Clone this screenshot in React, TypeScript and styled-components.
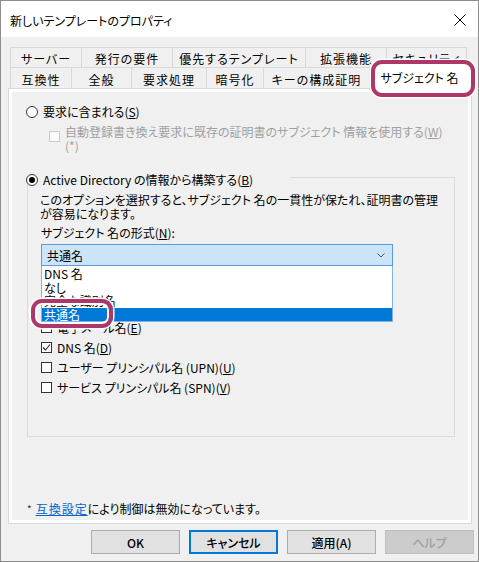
import React from 'react'
import styled, { createGlobalStyle } from 'styled-components'

const GlobalStyle = createGlobalStyle`
  html, body {
    margin: 0;
    padding: 0;
    background: #ffffff;
  }
  body {
    font-family: "Noto Sans CJK JP", "Noto Sans", sans-serif;
    font-size: 12px;
    color: #000;
    font-feature-settings: "palt";
  }
  * { box-sizing: border-box; }
`

const Window = styled.div`
  position: relative;
  width: 479px;
  height: 562px;
  border: 1px solid #8d8d8d;
  background: #f0f0f0;
  display: flex;
  flex-direction: column;
  overflow: hidden;
`

const TitleBar = styled.div`
  height: 36px;
  background: #ffffff;
  display: flex;
  align-items: center;
  justify-content: space-between;
  padding: 2px 12px 0 9px;
`

const Title = styled.span`
  font-size: 12px;
  line-height: 16px;
  padding-top: 2px;
`

const TabStrip = styled.div`
  display: flex;
  flex-direction: column;
  padding: 10px 0 0 9px;
`

const TabRow = styled.div<{ $h: number }>`
  display: flex;
  align-items: flex-start;
  height: ${p => p.$h}px;
`

const Tab = styled.div<{ $w: number }>`
  width: ${p => p.$w}px;
  height: 100%;
  border-top: 1px solid #d9d9d9;
  border-right: 1px solid #d9d9d9;
  display: flex;
  align-items: center;
  justify-content: center;
  padding-top: 2px;
  letter-spacing: 1px;
  white-space: nowrap;
  overflow: hidden;
  &:first-child {
    border-left: 1px solid #d9d9d9;
  }
`

const ActiveTab = styled(Tab)`
  position: relative;
  z-index: 2;
  height: 26px;
  margin: -3px 0 -2px -1px;
  background: #ffffff;
  border-left: 1px solid #d9d9d9;
  letter-spacing: 0;
  padding-top: 0;
`

const Panel = styled.div`
  height: 436px;
  margin: 0 6px 0 7px;
  border: 1px solid #d9d9d9;
  background: #ffffff;
  padding: 3px;
`

const Page = styled.div`
  height: 100%;
  background: #f0f0f0;
  display: flex;
  flex-direction: column;
  padding: 13px 13px 4px 14px;
`

const OptionRow = styled.label`
  display: flex;
  align-items: center;
  gap: 5px;
  height: 14px;
  line-height: 14px;
  white-space: nowrap;
`

const Radio = styled.span<{ $on?: boolean }>`
  width: 12px;
  height: 12px;
  border-radius: 50%;
  border: 1px solid #333333;
  background: #ffffff;
  display: flex;
  align-items: center;
  justify-content: center;
  flex: none;
  &::after {
    content: '';
    display: ${p => (p.$on ? 'block' : 'none')};
    width: 6px;
    height: 6px;
    border-radius: 50%;
    background: #000;
  }
`

const DisabledRow = styled.div`
  display: flex;
  align-items: flex-start;
  margin: 6px 0 0 23px;
  color: #a0a0a0;
`

const Box = styled.span<{ $disabled?: boolean }>`
  width: 11px;
  height: 11px;
  flex: none;
  border: 1px solid ${p => (p.$disabled ? '#cccccc' : '#333333')};
  background: ${p => (p.$disabled ? '#fbfbfb' : '#ffffff')};
  display: flex;
  align-items: center;
  justify-content: center;
`

const DisabledBox = styled(Box)`
  margin-top: 6px;
`

const DisabledText = styled.div`
  margin-left: 5px;
  line-height: 13.5px;
  white-space: nowrap;
`

const Group = styled.fieldset`
  margin: 21px 0 0 1px;
  padding: 0;
  width: 428px;
  min-width: 0;
  border: 1px solid #dcdcdc;
`

const Legend = styled.legend`
  margin-left: -2px;
  padding: 0;
  width: 264px;
  height: 8px;
  overflow: visible;
`

const GroupBody = styled.div`
  display: flex;
  flex-direction: column;
  padding: 12px 13px 39px 12px;
`

const Desc = styled.div`
  line-height: 14px;
  white-space: nowrap;
`

const FieldLabel = styled.div`
  margin: 5px 0 0 1px;
  line-height: 14px;
`

const ComboWrap = styled.div`
  position: relative;
  margin: 4px 0 0 1px;
  width: 352px;
`

const Combo = styled.div`
  height: 22px;
  border: 1px solid #569de5;
  background: #cce4f7;
  display: flex;
  align-items: center;
  justify-content: space-between;
  padding: 0 7px 0 5px;
`

const DropList = styled.ul`
  position: absolute;
  z-index: 3;
  top: 100%;
  left: 0;
  right: 0;
  height: 56px;
  margin: 0;
  padding: 1px 0 0;
  list-style: none;
  background: #ffffff;
  border: 1px solid #7eb4ea;
  border-top: none;
  overflow: hidden;
`

const DropItem = styled.li<{ $sel?: boolean }>`
  height: 13.5px;
  line-height: 13.5px;
  padding-left: 2px;
  white-space: nowrap;
  background: ${p => (p.$sel ? '#0078d7' : 'transparent')};
  color: ${p => (p.$sel ? '#ffffff' : '#000')};
`

const CheckRow = styled.label<{ $first?: boolean }>`
  display: flex;
  align-items: center;
  gap: 5px;
  height: 20px;
  margin: ${p => (p.$first ? '51px' : '0')} 0 0 1px;
  white-space: nowrap;
`

const Footnote = styled.div`
  margin-top: auto;
  display: flex;
  align-items: center;
  gap: 4px;
  height: 16px;
  padding-left: 1px;
  white-space: nowrap;
`

const Star = styled.span`
  font-size: 10px;
  color: #333;
`

const Link = styled.a`
  color: #0066cc;
  text-decoration: underline;
  letter-spacing: 1px;
  cursor: pointer;
`

const ButtonRow = styled.div`
  display: flex;
  justify-content: flex-end;
  gap: 9px;
  padding: 6px 4px 0 0;
`

const Button = styled.button<{ $primary?: boolean }>`
  width: 89px;
  height: 24px;
  font-family: inherit;
  font-size: 12px;
  font-weight: 500;
  font-feature-settings: "palt";
  color: ${p => (p.disabled ? '#a0a0a0' : '#000')};
  background: ${p => (p.disabled ? '#cccccc' : '#e1e1e1')};
  border: ${p => (p.$primary ? '2px solid #0078d7' : p.disabled ? '1px solid #bfbfbf' : '1px solid #adadad')};
  padding: 0;
`

const Highlight = styled.div<{ $x: number; $y: number; $w: number; $h: number }>`
  position: absolute;
  z-index: 10;
  left: ${p => p.$x}px;
  top: ${p => p.$y}px;
  width: ${p => p.$w}px;
  height: ${p => p.$h}px;
  border: 4px solid #ae3769;
  border-radius: 11px;
  box-shadow: 0 0 0 1.5px #ffffff, inset 0 0 0 2px #ffffff;
  pointer-events: none;
`

const CloseIcon = () => (
  <svg width="12" height="12" viewBox="0 0 12 12">
    <path d="M0.5 0.5 L11.5 11.5 M11.5 0.5 L0.5 11.5" stroke="#000" strokeWidth="1" fill="none" />
  </svg>
)

const Chevron = () => (
  <svg width="8" height="5" viewBox="0 0 8 5">
    <polyline points="0.5,0.5 4,4 7.5,0.5" stroke="#555" strokeWidth="1" fill="none" />
  </svg>
)

const Tick = () => (
  <svg width="9" height="9" viewBox="0 0 9 9">
    <polyline points="1,4.5 3.5,7 8,1.5" stroke="#222" strokeWidth="1.1" fill="none" />
  </svg>
)

const backTabs = [
  { label: 'サーバー', w: 72 },
  { label: '発行の要件', w: 91 },
  { label: '優先するテンプレート', w: 133 },
  { label: '拡張機能', w: 81 },
  { label: 'セキュリティ', w: 80 },
]

const frontTabs = [
  { label: '互換性', w: 62 },
  { label: '全般', w: 60 },
  { label: '要求処理', w: 75 },
  { label: '暗号化', w: 57 },
  { label: 'キーの構成証明', w: 106 },
]

const formats = ['DNS 名', 'なし', '完全な識別名', '共通名']

const App = () => {
  return (
    <>
      <GlobalStyle />
      <Window>
        <TitleBar>
          <Title>新しいテンプレートのプロパティ</Title>
          <CloseIcon />
        </TitleBar>

        <TabStrip>
          <TabRow $h={20}>
            {backTabs.map(t => (
              <Tab key={t.label} $w={t.w}>{t.label}</Tab>
            ))}
          </TabRow>
          <TabRow $h={21}>
            {frontTabs.map(t => (
              <Tab key={t.label} $w={t.w}>{t.label}</Tab>
            ))}
            <ActiveTab $w={101}>サブジェクト 名</ActiveTab>
          </TabRow>
        </TabStrip>

        <Panel>
          <Page>
            <OptionRow>
              <Radio />
              <span>要求に含まれる(<u>S</u>)</span>
            </OptionRow>
            <DisabledRow>
              <DisabledBox $disabled />
              <DisabledText>
                自動登録書き換え要求に既存の証明書のサブジェクト 情報を使用する(<u>W</u>)
                <br />(*)
              </DisabledText>
            </DisabledRow>

            <Group>
              <Legend>
                <OptionRow>
                  <Radio $on />
                  <span>Active Directory の情報から構築する(<u>B</u>)</span>
                </OptionRow>
              </Legend>
              <GroupBody>
                <Desc>
                  このオプションを選択すると、サブジェクト 名の一貫性が保たれ、証明書の管理
                  <br />が容易になります。
                </Desc>
                <FieldLabel>サブジェクト 名の形式(<u>N</u>):</FieldLabel>
                <ComboWrap>
                  <Combo>
                    <span>共通名</span>
                    <Chevron />
                  </Combo>
                  <DropList>
                    {formats.map(f => (
                      <DropItem key={f} $sel={f === '共通名'}>{f}</DropItem>
                    ))}
                  </DropList>
                </ComboWrap>
                <CheckRow $first>
                  <Box />
                  <span>電子メール名(<u>E</u>)</span>
                </CheckRow>
                <CheckRow>
                  <Box><Tick /></Box>
                  <span>DNS 名(<u>D</u>)</span>
                </CheckRow>
                <CheckRow>
                  <Box />
                  <span>ユーザー プリンシパル名 (UPN)(<u>U</u>)</span>
                </CheckRow>
                <CheckRow>
                  <Box />
                  <span>サービス プリンシパル名 (SPN)(<u>V</u>)</span>
                </CheckRow>
              </GroupBody>
            </Group>

            <Footnote>
              <Star>*</Star>
              <span>
                <Link>互換設定</Link>により制御は無効になっています。
              </span>
            </Footnote>
          </Page>
        </Panel>

        <ButtonRow>
          <Button>OK</Button>
          <Button $primary>キャンセル</Button>
          <Button>適用(A)</Button>
          <Button disabled>ヘルプ</Button>
        </ButtonRow>

        <Highlight $x={370} $y={59} $w={104} $h={37} />
        <Highlight $x={30} $y={298} $w={82} $h={29} />
      </Window>
    </>
  )
}

export default App
